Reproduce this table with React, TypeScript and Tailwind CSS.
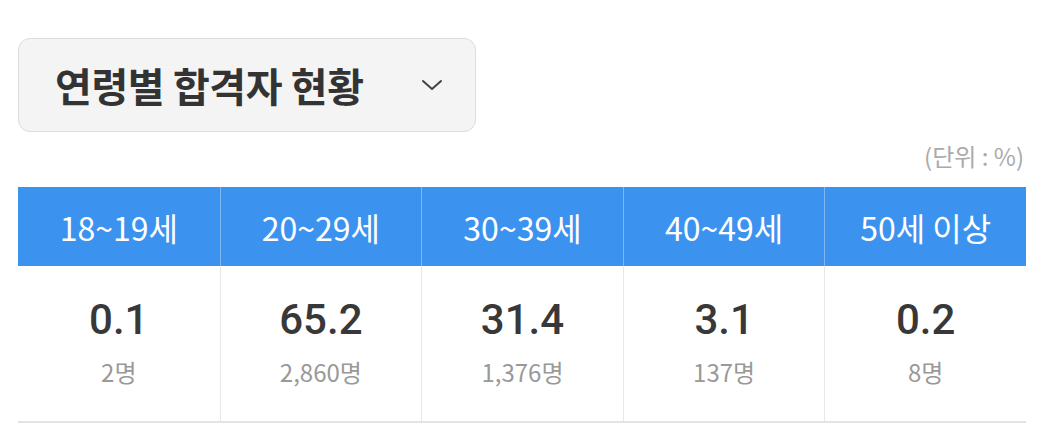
import React from "react";

const rows = [
  { label: "18~19세", value: "0.1", count: "2명" },
  { label: "20~29세", value: "65.2", count: "2,860명" },
  { label: "30~39세", value: "31.4", count: "1,376명" },
  { label: "40~49세", value: "3.1", count: "137명" },
  { label: "50세 이상", value: "0.2", count: "8명" },
];

export default function App() {
  return (
    <div className="w-[1046px] h-[443px] bg-white pt-[38px] pl-[18px] pr-[20px] font-['Noto_Sans_CJK_KR','Noto_Sans',sans-serif] text-[#333]">
      {/* 드롭다운 */}
      <button className="flex items-center w-[458px] h-[94px] rounded-[12px] border border-[#dcdcdc] bg-[#f4f4f4] pl-[36px] pr-[32px]">
        <span className="text-[40px] font-bold tracking-[-0.4px] text-[#333] leading-none">
          연령별 합격자 현황
        </span>
        <svg
          className="ml-auto"
          width="22"
          height="12"
          viewBox="0 0 22 12"
          fill="none"
          stroke="#444"
          strokeWidth="2"
          strokeLinecap="round"
          strokeLinejoin="round"
        >
          <path d="M2 2l9 8 9-8" />
        </svg>
      </button>

      <div className="flex justify-end pr-[2px] mt-[4px] h-[40px] items-center text-[24px] text-[#aaa]">
        (단위 : %)
      </div>

      {/* 표 */}
      <div className="mt-[11px] w-[1008px]">
        <div className="grid grid-cols-5 h-[79px] bg-[#3b93ef]">
          {rows.map((r, i) => (
            <div
              key={r.label}
              className={`flex items-center justify-center text-white text-[32px] ${i > 0 ? "border-l border-[#7fb8f5]" : ""}`}
            >
              {r.label}
            </div>
          ))}
        </div>
        <div className="grid grid-cols-5 h-[157px] border-b-2 border-[#e4e4e4]">
          {rows.map((r, i) => (
            <div
              key={r.label}
              className={`flex flex-col items-center pt-[33px] ${i > 0 ? "border-l border-[#e8e8e8]" : ""}`}
            >
              <div className="text-[42px] font-medium leading-none text-[#383838] font-['Roboto','Noto_Sans_CJK_KR',sans-serif]">
                {r.value}
              </div>
              <div className="mt-[19px] text-[24px] leading-none text-[#999]">
                {r.count}
              </div>
            </div>
          ))}
        </div>
      </div>
    </div>
  );
}
